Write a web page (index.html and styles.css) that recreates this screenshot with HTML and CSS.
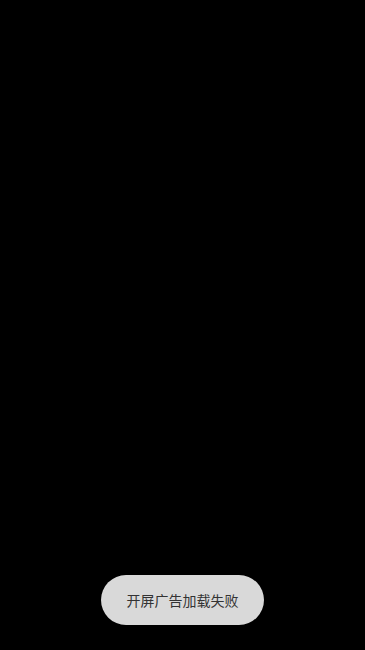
FILE: index.html
```html
<!DOCTYPE html>
<html lang="zh-CN">
<head>
    <meta charset="UTF-8">
    <meta name="viewport" content="width=device-width, initial-scale=1.0">
    <title>开屏广告</title>
    <link rel="stylesheet" href="styles.css">
</head>
<body>
    <!-- Splash screen -->
    <div class="splash">
        <div class="toast">开屏广告加载失败</div>
    </div>
</body>
</html>
```

FILE: styles.css
```css
* {
    margin: 0;
    padding: 0;
    box-sizing: border-box;
    font-family: "Noto Sans CJK SC", "Noto Sans", sans-serif;
}

body {
    background-color: #000000;
}

.splash {
    height: 650px;
    display: flex;
    flex-direction: column;
    justify-content: flex-end;
    align-items: center;
    padding-bottom: 25px;
}

.toast {
    width: 163px;
    height: 50px;
    border-radius: 25px;
    background-color: #d9d9d9;
    color: #333333;
    font-size: 14px;
    display: flex;
    justify-content: center;
    align-items: center;
}
```
